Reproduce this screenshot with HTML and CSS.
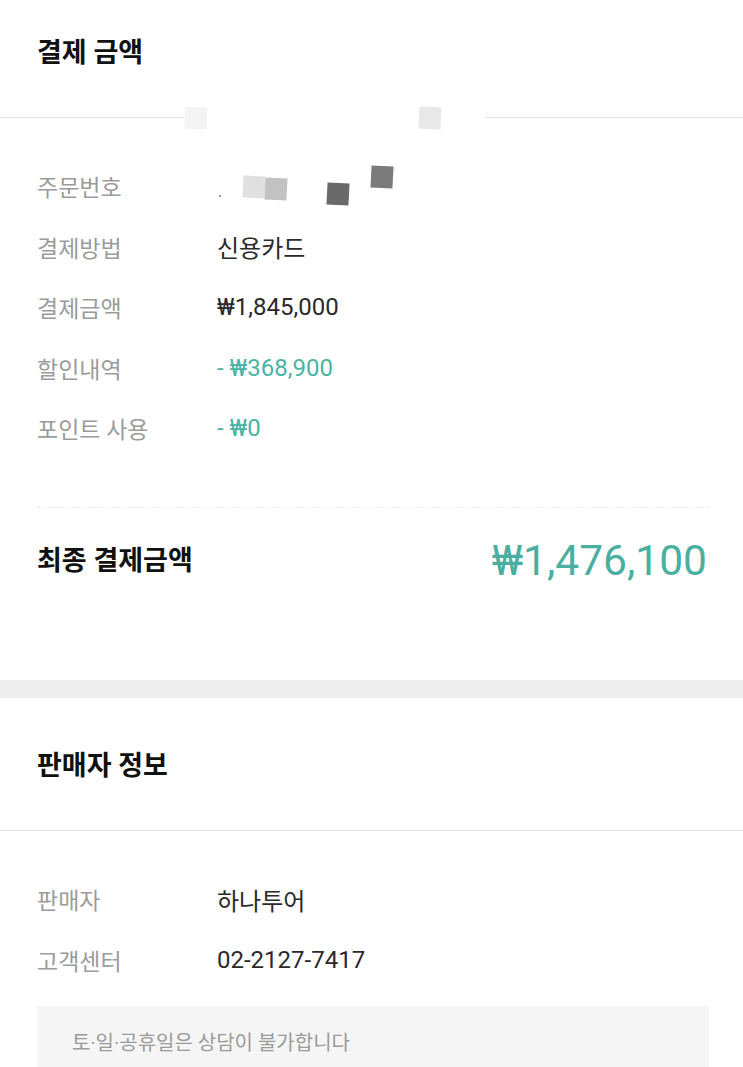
FILE: index.html
```html
<!DOCTYPE html>
<html lang="ko">
<head>
    <meta charset="UTF-8">
    <meta name="viewport" content="width=device-width, initial-scale=1.0">
    <title>결제 금액</title>
    <link rel="stylesheet" href="styles.css">
</head>
<body>
    <section class="section payment">
        <div class="section-head">
            <h2>결제 금액</h2>
        </div>

        <ul class="info-list">
            <li><span class="label">주문번호</span><span class="value"></span></li>
            <li><span class="label">결제방법</span><span class="value">신용카드</span></li>
            <li><span class="label">결제금액</span><span class="value">₩1,845,000</span></li>
            <li><span class="label">할인내역</span><span class="value minus">- ₩368,900</span></li>
            <li><span class="label">포인트 사용</span><span class="value minus">- ₩0</span></li>
        </ul>

        <div class="total">
            <span class="total-label">최종 결제금액</span>
            <span class="total-price">₩1,476,100</span>
        </div>

        <!-- redacted order number -->
        <div class="mosaic">
            <i class="px px1"></i>
            <i class="px px2"></i>
            <i class="px px3"></i>
            <i class="px px4"></i>
            <i class="px px5"></i>
            <i class="px px6"></i>
            <i class="dot"></i>
        </div>
    </section>

    <div class="divider"></div>

    <section class="section seller">
        <div class="section-head">
            <h2>판매자 정보</h2>
        </div>

        <ul class="info-list">
            <li><span class="label">판매자</span><span class="value">하나투어</span></li>
            <li><span class="label">고객센터</span><span class="value">02-2127-7417</span></li>
        </ul>

        <div class="notice">토·일·공휴일은 상담이 불가합니다</div>
    </section>
</body>
</html>
```

FILE: styles.css
```css
body {
    margin: 0;
    padding: 0;
    background: #fff;
    font-family: Roboto, "Noto Sans CJK KR", sans-serif;
    color: #222;
}
.section {
    position: relative;
    background: #fff;
}
.section-head {
    padding: 36px 37px 47px;
    border-bottom: 1px solid #e3e3e3;
}
.section-head h2 {
    margin: 0;
    font-size: 27px;
    line-height: 34px;
    font-weight: bold;
    color: #111;
}
.info-list {
    list-style: none;
    margin: 0;
    padding: 38px 34px 0 37px;
}
.info-list li {
    display: flex;
    align-items: center;
    height: 60.5px;
}
.label {
    width: 180px;
    font-size: 23px;
    color: #9b9b9b;
}
.value {
    font-size: 24px;
    color: #2a2a2a;
}
.value.minus {
    color: #4ab3a3;
}
.total {
    display: flex;
    justify-content: space-between;
    align-items: center;
    margin: 48px 34px 0 37px;
    padding: 29px 2px 95px 0;
    border-top: 1px dashed #ececec;
    line-height: 48px;
}
.total-label {
    font-size: 27px;
    font-weight: bold;
    color: #111;
}
.total-price {
    font-size: 42.5px;
    color: #4aafa0;
}
.divider {
    height: 18px;
    background: #eeeeee;
}
.seller .section-head {
    padding-top: 51px;
}
.seller .info-list {
    padding-top: 38px;
}
.seller .info-list li {
    height: 61px;
}
.notice {
    margin: 15px 34px 0 37px;
    padding: 23px 35px 30px;
    background: #f5f5f5;
    font-size: 20px;
    line-height: 28px;
    color: #9a9a9a;
}

/* mosaic blur over the order number */
.mosaic {
    position: absolute;
    left: 185px;
    top: 100px;
    width: 300px;
    height: 36px;
    background: #fff;
}
.px {
    position: absolute;
    width: 22px;
    height: 22px;
}
.px1 { left: 0; top: 7px; background: #f3f3f3; transform: rotate(3deg); }
.px2 { left: 234px; top: 7px; background: #e8e8e8; transform: rotate(3deg); }
.px3 { left: 58px; top: 76px; background: #e0e0e0; transform: rotate(3deg); }
.px4 { left: 80px; top: 78px; background: #c2c2c2; transform: rotate(3deg); }
.px5 { left: 142px; top: 83px; background: #6a6a6a; transform: rotate(3deg); }
.px6 { left: 186px; top: 66px; background: #7a7a7a; transform: rotate(3deg); }
.dot {
    position: absolute;
    left: 34px;
    top: 95px;
    width: 2px;
    height: 2px;
    background: #999;
}
```
